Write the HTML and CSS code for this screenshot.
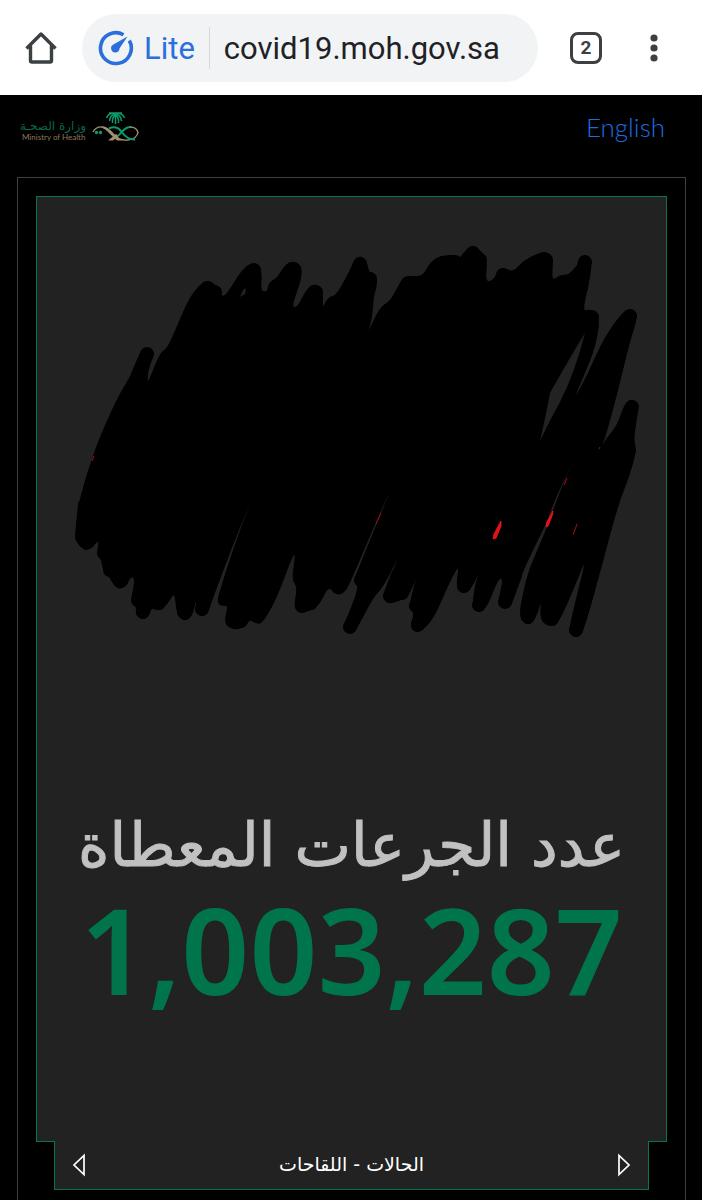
FILE: index.html
```
<!DOCTYPE html>
<html lang="ar">
<head>
<meta charset="utf-8">
<meta name="viewport" content="width=device-width, initial-scale=1">
<title>covid19.moh.gov.sa</title>
<link rel="stylesheet" href="styles.css">
</head>
<body>
<header class="toolbar">
  <button class="icon-button" type="button" aria-label="Home">
    <svg width="32" height="34" viewBox="0 0 32 34" fill="none" stroke="#3c4043" stroke-width="3.4" stroke-linejoin="round"><path d="M1.500 17.500 16 3 30.500 17.500M5.500 14V29.500Q5.500 31 7 31H25Q26.500 31 26.500 29.500V14"/></svg>
  </button>
  <div class="address">
    <svg class="lite-icon" width="36" height="36" viewBox="0 0 36 36"><path d="M25.500 4.700A15.400 15.400 0 1 0 31.300 10.500" fill="none" stroke="#2a6fdb" stroke-width="3.600"/><path d="M29.500 6.500 21.500 18.500A4.200 4.200 0 1 1 15.400 14.600Z" fill="#2a6fdb"/></svg>
    <span class="lite">Lite</span>
    <span class="url">covid19.moh.gov.sa</span>
  </div>
  <button class="tabs" type="button" aria-label="Tabs">2</button>
  <button class="icon-button" type="button" aria-label="Menu">
    <svg width="8" height="28" viewBox="0 0 8 28" fill="#3c4043"><circle cx="4" cy="4" r="3.600"/><circle cx="4" cy="14" r="3.600"/><circle cx="4" cy="24" r="3.600"/></svg>
  </button>
</header>
<main class="site">
  <div class="site-head">
    <div class="brand">
      <div class="brand-text"><span class="brand-ar" dir="rtl">وزارة الصحـة</span><span class="brand-en">Ministry of Health</span></div>
      <svg width="48" height="32" viewBox="0 0 48 32" fill="none">
        <path d="M23.500 13V3M23.500 4Q20 6 20.500 12M23.500 4Q27 6 26.500 12M23.500 3Q18 4 17.500 10M23.500 3Q29 4 29.500 10M23.500 3Q17 1 14.500 7M23.500 3Q30 1 32.500 7M17 2H30" stroke="#0c9b6b" stroke-width="1.500"/>
        <path d="M1 21Q4 15 11 16Q16 17 21 23Q27 30 36 29Q45 28 46 21" stroke="#a18e6c" stroke-width="1.300"/>
        <path d="M8 16Q16 16 22 23L30 29.500H25L18 23Q14 18 8 16ZM16 29.500 24 23 27 25 21 29.500Z" fill="#a18e6c"/>
        <path d="M17 17.500Q24 14 29 20Q35 29 43 28.500M26 25Q34 15 39 16" stroke="#0c9b6b" stroke-width="2"/>
        <path d="M38 16Q45 16 46 22" stroke="#a18e6c" stroke-width="1.300"/>
        <circle cx="4.500" cy="21.500" r="1.700" fill="#0c9b6b"/><circle cx="8.500" cy="21.500" r="1.700" fill="#0c9b6b"/>
      </svg>
    </div>
    <a class="language" href="#english" lang="en">English</a>
  </div>
  <div class="frame">
    <section class="card">
      <svg class="scribble" viewBox="37 197 629 588" aria-hidden="true">
        <path class="ink" data-points="99 440 118 397 133 373 141 352 147 347 153 353 147 373 147 387 160 353 168 348 177 327 190 297 202 283 207 281 215 284 222 298 228 293 242 270 253 262 262 270 260 292 268 292 269 282 277 279 285 265 293 261 302 267 300 283 291 306 297 309 308 287 316 284 323 290 322 311 328 297 337 296 357 257 363 257 368 266 368 272 377 277 376 288 373 297 372 317 366 338 380 307 390 302 407 275 422 278 432 260 443 256 455 255 459 260 465 251 473 245 482 252 487 263 485 280 491 283 503 267 513 273 523 261 540 253 547 252 553 258 551 282 560 275 568 276 578 265 585 254 592 260 588 287 585 297 583 312 590 309 600 317 595 347 587 367 571 405 587 377 603 340 622 313 631 308 638 315 629 343 617 393 605 437 600 450 607 438 618 425 625 403 633 399 639 405 633 438 636 450 630 473 617 507 603 560 590 607 582 633 575 637 569 630 577 597 588 552 570 597 558 623 550 627 540 620 542 597 535 620 527 625 519 617 524 590 530 568 538 550 549 523 555 506 566 478 579 450 563 481 552 506 546 523 532 551 520 577 512 603 505 609 498 603 504 578 498 578 487 607 478 613 472 605 478 573 496 532 502 518 507 503 500 520 493 538 473 587 463 594 456 588 460 563 450 580 432 622 417 633 410 627 415 613 409 607 418 572 408 597 400 600 388 604 383 597 403 547 383 587 373 597 357 628 348 634 343 628 360 587 354 580 380 517 396 477 378 516 348 587 343 593 337 595 328 585 318 608 300 613 294 607 298 587 292 580 296 555 293 553 277 597 263 622 257 624 251 618 240 630 227 627 225 618 229 604 220 606 217 600 240 530 259 483 238 530 207 613 202 616 196 612 197 593 192 617 184 621 177 615 175 590 167 605 158 611 152 607 143 620 136 615 137 607 131 602 136 577 129 577 122 589 115 587 110 577 103 570 102 560 97 553 100 538 88 551 80 547 75 537 80 497 93 457"/>
        <path class="finger" d="M147 354 138 375M208 288 195 315M215 292 205 320M254 270 235 310M294 269 278 310M316 292 308 315M360 264 345 300M370 279 360 310M408 283 390 315M443 263 430 295M455 262 445 295M473 253 460 285M480 260 475 290M503 275 495 300M546 260 535 295M585 262 578 290M592 317 586 340M630 316 615 350M632 407 626 430M629 450 622 475M576 630 588 590M552 619 560 590M528 617 536 590M505 602 515 575M479 605 488 580M464 586 474 565M418 625 430 600M416 606 426 580M390 596 398 575M402 593 410 570M350 627 368 590M361 580 370 560M338 587 349 565M302 606 309 580M311 603 320 580M257 616 270 590M233 620 240 600M241 621 250 600M225 599 233 578M202 609 210 585M184 612 195 580M159 603 168 580M143 612 150 590M138 600 145 570M121 581 132 560M110 570 120 550M104 553 115 530M88 542 95 520M82 537 85 505"/>
        <path class="gap" d="M585 333Q578 344 573 353 560 375 550 393 546 415 540 441 550 420 559 404 575 373 585 333ZM240 297 243 290 246 288 245 294Z"/>
        <path class="red" d="M501 521 501 526 496 538 493 539 494 534ZM553 511 552 516 548 526 546 527 547 522Z"/>
        <path class="red-line" d="M381 513 376 524M567 478 564 485M577 524 573 535M600 447 599 449M94 456 92 461"/>
      </svg>
      <div class="stat" dir="rtl">
        <h1 class="stat-label">عدد الجرعات المعطاة</h1>
        <p class="stat-value">1,003,287</p>
      </div>
    </section>
    <nav class="pager" aria-label="الصفحات">
      <button class="arrow" type="button" aria-label="السابق"><svg width="14" height="24" viewBox="0 0 14 24"><path d="M12 2.500V21.500L2 12Z" fill="none" stroke="#fff" stroke-width="1.700"/></svg></button>
      <span class="pager-title" dir="rtl">الحالات - اللقاحات</span>
      <button class="arrow" type="button" aria-label="التالي"><svg width="14" height="24" viewBox="0 0 14 24"><path d="M2 2.500V21.500L12 12Z" fill="none" stroke="#fff" stroke-width="1.700"/></svg></button>
    </nav>
  </div>
</main>
<script src="scribble.js"></script>
</body>
</html>
```
FILE: scribble.js
```
// Draws the ink outline as a closed curve through the midpoints of its points.
const ink = document.querySelector(".ink");
const values = ink.dataset.points.split(" ").map(Number);
const points = [];
for (let i = 0; i < values.length; i += 2) points.push([values[i], values[i + 1]]);
const middle = (a, b) => [(a[0] + b[0]) / 2, (a[1] + b[1]) / 2];
let outline = "M" + middle(points[points.length - 1], points[0]);
points.forEach((point, i) => {
  outline += "Q" + point + " " + middle(point, points[(i + 1) % points.length]);
});
ink.setAttribute("d", outline + "Z");
```
FILE: styles.css
```
* { box-sizing: border-box; }
body {
  margin: 0;
  min-height: 100vh;
  display: flex;
  flex-direction: column;
  background: #000;
  font-family: Lato, "DejaVu Sans", sans-serif;
}
button { padding: 0; border: 0; background: none; }
svg { display: block; }
.toolbar {
  display: flex;
  align-items: center;
  height: 95px;
  padding: 0 44px 0 25px;
  background: #fff;
  font-family: Roboto, sans-serif;
}
.icon-button { flex: none; }
.address {
  flex: 1;
  display: flex;
  align-items: center;
  height: 68px;
  margin: 0 32px 0 25px;
  padding-left: 16px;
  border-radius: 34px;
  background: #f1f3f5;
  font-size: 31px;
  white-space: nowrap;
}
.lite { margin-left: 10px; padding-top: 2px; color: #2a6fdb; }
.url {
  margin-left: 14px;
  padding: 2px 0 0 14px;
  border-left: 1px solid #d5d7da;
  line-height: 40px;
  color: #202124;
}
.tabs {
  width: 32px;
  height: 32px;
  margin-right: 48px;
  border: 3px solid #3c4043;
  border-radius: 8px;
  color: #3c4043;
  font: 700 19px Roboto, sans-serif;
}
.site { flex: 1; display: flex; flex-direction: column; }
.site-head {
  display: flex;
  justify-content: space-between;
  align-items: center;
  height: 82px;
  padding: 0 37px 18px 22px;
}
.brand { display: flex; align-items: center; gap: 6px; }
.brand-text { display: flex; flex-direction: column; width: 64px; padding-top: 8px; white-space: nowrap; }
.brand-ar { font: 12px/12px "DejaVu Sans", sans-serif; color: #086b48; }
.brand-en { font: 8px/10px Lato, sans-serif; color: #8b7a5b; }
.language { font-size: 26px; font-weight: 300; color: #1c6ce0; text-decoration: none; }
.frame {
  flex: 1;
  margin: 0 16px 0 17px;
  padding: 18px 18px 10px;
  border: 1px solid #3f3f3f;
  border-bottom: 0;
}
.card { border: 1px solid #08754f; background: #222; }
.scribble { width: 100%; }
.ink { stroke: #000; stroke-width: 1; stroke-linejoin: round; }
.finger { fill: none; stroke: #000; stroke-width: 14; stroke-linecap: round; }
.gap { fill: #222; }
.red { fill: #e8101a; stroke: #e8101a; stroke-width: 1; }
.red-line { fill: none; stroke: #a50e14; stroke-width: 1; }
.stat { padding: 18px 40px 126px; white-space: nowrap; text-align: center; }
.stat-label {
  margin: 0;
  font: 400 60px/84px "DejaVu Sans", sans-serif;
  -webkit-text-stroke: 1px #c1c1c1;
  color: #c1c1c1;
}
.stat-value {
  margin: 0;
  font: 600 119px/124px "Noto Sans", sans-serif;
  padding-bottom: 4px;
  color: #00754c;
}
.pager {
  position: relative;
  display: flex;
  align-items: center;
  justify-content: space-between;
  height: 49px;
  margin: -1px 18px 0;
  padding: 0 17px;
  border: 1px solid #08754f;
  border-top: 0;
  background: #222;
  color: #fff;
}
.pager-title {
  padding-bottom: 2px;
  font: 400 19px/24px "DejaVu Sans", sans-serif;
}
```
